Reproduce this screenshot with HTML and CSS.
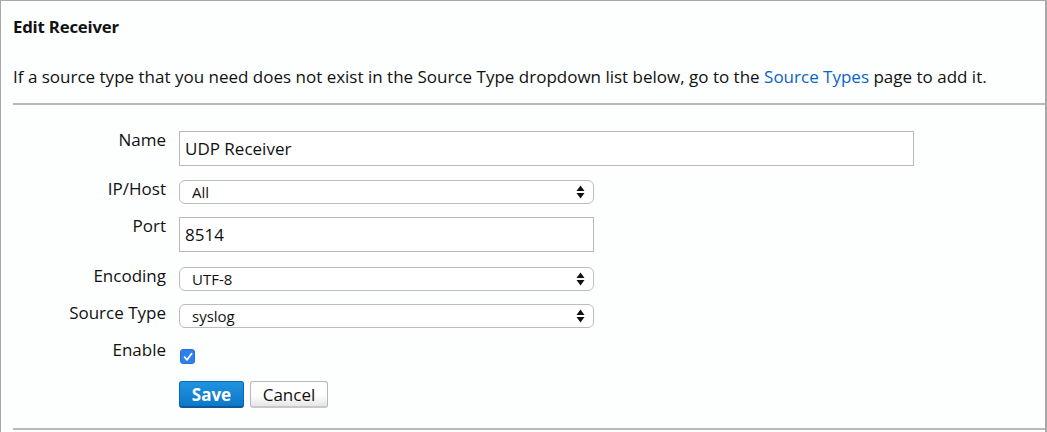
FILE: index.html
```html
<!DOCTYPE html>
<html>
<head>
<meta charset="utf-8">
<link rel="stylesheet" href="styles.css">
</head>
<body>
<div class="frame">
  <h1 class="title">Edit Receiver</h1>
  <p class="intro">If a source type that you need does not exist in the Source Type dropdown list below, go to the <a href="#" class="link">Source Types</a> page to add it.</p>
  <div class="form">
    <label class="lbl">Name</label>
    <div class="ctl"><input class="text wide" type="text" value="UDP Receiver"></div>

    <label class="lbl">IP/Host</label>
    <div class="ctl"><div class="sel"><span class="sel-val">All</span><svg class="arrows" width="9" height="14" viewBox="0 0 9 14"><path d="M4.5 0.5 L8.5 6 L0.5 6 Z M0.5 8 L8.5 8 L4.5 13.5 Z" fill="#111"/></svg></div></div>

    <label class="lbl">Port</label>
    <div class="ctl"><input class="text narrow" type="text" value="8514"></div>

    <label class="lbl">Encoding</label>
    <div class="ctl"><div class="sel"><span class="sel-val">UTF-8</span><svg class="arrows" width="9" height="14" viewBox="0 0 9 14"><path d="M4.5 0.5 L8.5 6 L0.5 6 Z M0.5 8 L8.5 8 L4.5 13.5 Z" fill="#111"/></svg></div></div>

    <label class="lbl">Source Type</label>
    <div class="ctl"><div class="sel"><span class="sel-val">syslog</span><svg class="arrows" width="9" height="14" viewBox="0 0 9 14"><path d="M4.5 0.5 L8.5 6 L0.5 6 Z M0.5 8 L8.5 8 L4.5 13.5 Z" fill="#111"/></svg></div></div>

    <label class="lbl lbl-enable">Enable</label>
    <div class="ctl"><span class="check"><svg width="10" height="10" viewBox="0 0 10 10"><path d="M1.6 5.2 L4 7.8 L8.6 1.8" fill="none" stroke="#fff" stroke-width="1.8" stroke-linecap="round" stroke-linejoin="round"/></svg></span></div>

    <div class="spacer"></div>
    <div class="ctl buttons"><button class="btn btn-save">Save</button><button class="btn btn-cancel">Cancel</button></div>
  </div>
  <div class="bottom-line"></div>
</div>
</body>
</html>
```
FILE: styles.css
```css
html, body {
  margin: 0;
  padding: 0;
  background: #fdfefe;
}
body {
  font-family: "Open Sans", "Noto Sans", sans-serif;
  color: #1a1a1a;
}
.frame {
  width: 1047px;
  height: 432px;
  box-sizing: border-box;
  border-top: 1px solid #a8a8a8;
  border-left: 1px solid #a8a8a8;
  border-right: 2px solid #a8a8a8;
  padding: 0 0 0 12px;
  overflow: hidden;
}
.title {
  margin: 16px 0 0 0;
  font-size: 16.8px;
  line-height: 20px;
  font-weight: 700;
  color: #111;
  letter-spacing: -0.2px;
}
.intro {
  margin: 30px 0 0 0;
  font-size: 17px;
  line-height: 20px;
  padding-bottom: 16px;
  border-bottom: 2px solid #b9b9b9;
  color: #111;
}
.link {
  color: #0b63c5;
  text-decoration: none;
}
.form {
  display: grid;
  grid-template-columns: 153px 1fr;
  column-gap: 13px;
  margin-top: 26px;
}
.lbl {
  font-size: 17px;
  line-height: 18px;
  text-align: right;
  align-self: start;
  color: #111;
}
.ctl {
  display: flex;
  align-items: flex-start;
}
.text {
  box-sizing: border-box;
  height: 35px;
  border: 1px solid #b8b8b8;
  background: #fff;
  font-family: inherit;
  font-size: 17px;
  padding: 0 5px 1px 5px;
  color: #111;
  margin: 0;
  outline: none;
}
.wide { width: 735px; margin-bottom: 14px; }
.narrow { width: 415px; margin-bottom: 15px; }
.sel {
  position: relative;
  box-sizing: border-box;
  width: 415px;
  height: 24px;
  border: 1px solid #bdbdbd;
  border-radius: 6px;
  background: #fff;
  margin-bottom: 13px;
  display: flex;
  align-items: center;
  padding-left: 12px;
  font-size: 15px;
  color: #111;
}
.sel-val {
  line-height: 22px;
}
.arrows {
  position: absolute;
  right: 8px;
  top: 4px;
}
.lbl-enable {
  margin-top: 0;
}
.check {
  margin-top: 8px;
  margin-left: 1px;
  width: 15px;
  height: 15px;
  box-sizing: border-box;
  border-radius: 3px;
  background: #2e7ff0;
  border: 1px solid #2a6fd6;
  display: flex;
  align-items: center;
  justify-content: center;
}
.buttons {
  margin-top: 17px;
  gap: 6px;
}
.btn {
  box-sizing: border-box;
  height: 27px;
  font-family: inherit;
  border-radius: 3px;
  padding: 0;
  margin: 0;
  cursor: pointer;
}
.btn-save {
  width: 65px;
  background: linear-gradient(#1e94e0, #0d78c9);
  border: 1px solid #0b67ad;
  border-bottom: 2px solid #0a5a98;
  color: #fff;
  font-weight: 700;
  font-size: 17px;
}
.btn-cancel {
  width: 78px;
  background: linear-gradient(#fefefe 55%, #e6e6e6);
  border: 1px solid #b7b7b7;
  border-bottom: 2px solid #c8c8c8;
  color: #111;
  font-size: 17px;
}
.bottom-line {
  margin-top: 20px;
  height: 0;
  border-top: 2px solid #b9b9b9;
}
```
